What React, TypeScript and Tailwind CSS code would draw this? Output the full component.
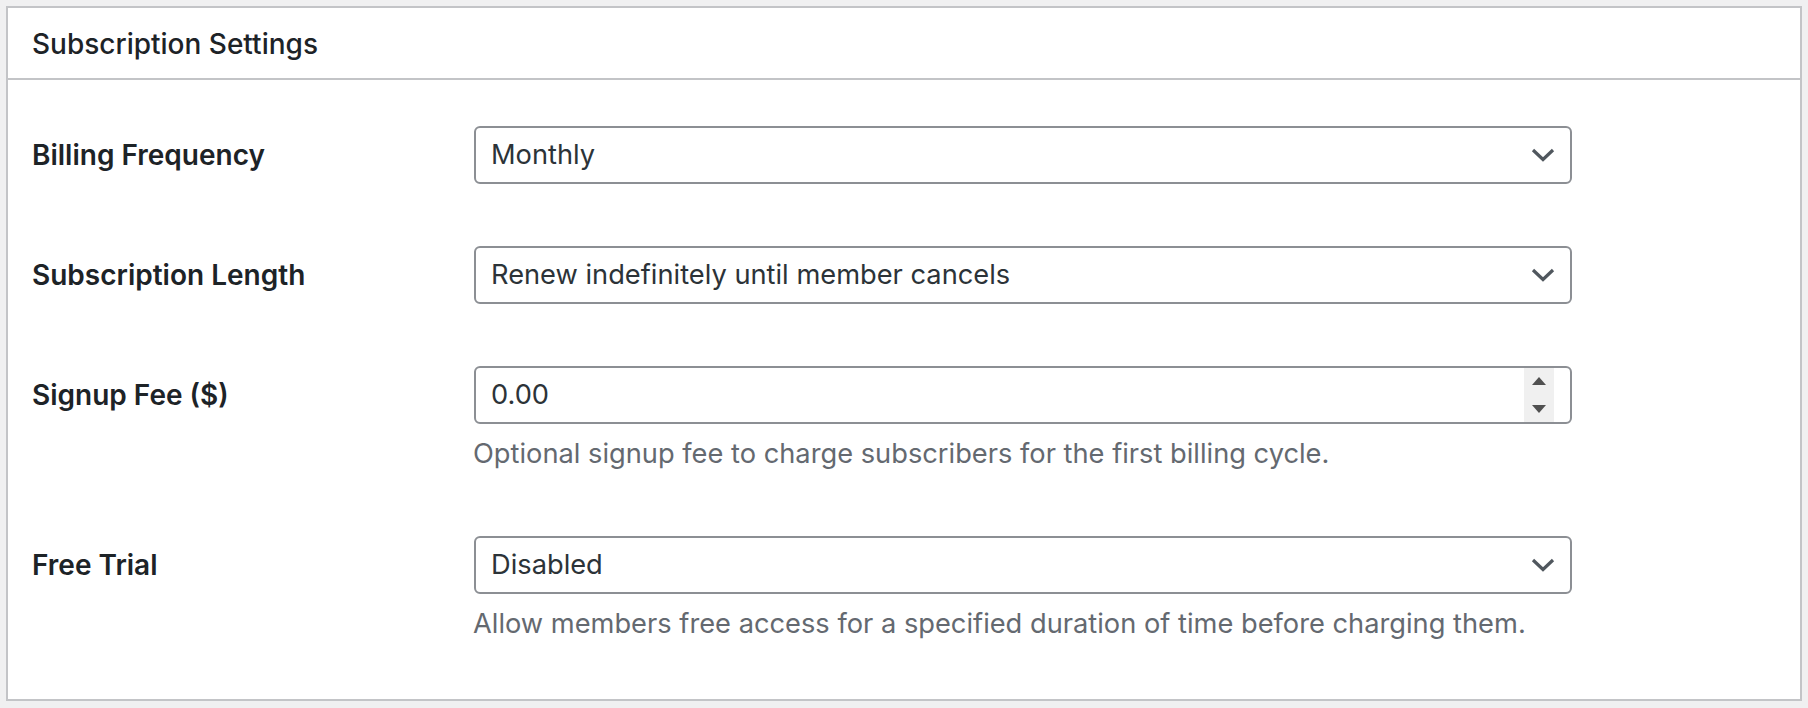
import React from "react";

const font = { fontFamily: 'Inter, "Noto Sans", sans-serif' };

function Chevron() {
  return (
    <svg width="24" height="14" viewBox="0 0 24 14" className="shrink-0">
      <path d="M2 2 L12 11.5 L22 2" fill="none" stroke="#50575e" strokeWidth="3.2" strokeLinecap="butt" strokeLinejoin="miter" />
    </svg>
  );
}

function SelectBox({ value }: { value: string }) {
  return (
    <div className="flex h-[58px] w-[1098px] items-center justify-between rounded-[6px] border-2 border-[#8c8f94] bg-white pl-[15px] pr-[15px]">
      <span className="text-[27.25px] leading-none text-[#2c3338]">{value}</span>
      <Chevron />
    </div>
  );
}

function NumberBox({ value }: { value: string }) {
  return (
    <div className="flex h-[58px] w-[1098px] items-stretch justify-between rounded-[6px] border-2 border-[#8c8f94] bg-white pl-[15px] pr-[16px]">
      <span className="self-center text-[27.25px] leading-none text-[#2c3338]">{value}</span>
      <div className="flex w-[30px] flex-col items-center justify-between bg-[#f0f0f0] py-[9px]">
        <svg width="14" height="8" viewBox="0 0 14 8">
          <path d="M7 0 L14 8 L0 8 Z" fill="#505050" />
        </svg>
        <svg width="14" height="8" viewBox="0 0 14 8">
          <path d="M0 0 L14 0 L7 8 Z" fill="#505050" />
        </svg>
      </div>
    </div>
  );
}

function Label({ children }: { children: React.ReactNode }) {
  return (
    <div className="flex h-[58px] w-[442px] shrink-0 items-center text-[28px] font-semibold text-[#1d2327] -ml-[1px]">
      {children}
    </div>
  );
}

function Desc({ children }: { children: React.ReactNode }) {
  return (
    <div className="mt-[12px] h-[36px] text-[27.25px] leading-[36px] text-[#646970] -ml-[1px]">
      {children}
    </div>
  );
}

export default function App() {
  return (
    <div className="min-h-[708px] w-[1808px] bg-[#f0f0f1] p-[6px]" style={font}>
      <div className="border-2 border-[#c3c4c7] bg-white">
        <div className="flex h-[72px] items-center border-b-2 border-[#c3c4c7] pl-[24px] pt-[1px]">
          <h2 className="text-[28px] font-medium text-[#1d2327]">Subscription Settings</h2>
        </div>
        <div className="flex flex-col pl-[25px] pt-[46px] pb-[57px]">
          <div className="flex items-start">
            <Label>Billing Frequency</Label>
            <SelectBox value="Monthly" />
          </div>
          <div className="mt-[62px] flex items-start">
            <Label>Subscription Length</Label>
            <SelectBox value="Renew indefinitely until member cancels" />
          </div>
          <div className="mt-[62px] flex items-start">
            <Label>Signup Fee ($)</Label>
            <div className="flex flex-col">
              <NumberBox value="0.00" />
              <Desc>Optional signup fee to charge subscribers for the first billing cycle.</Desc>
            </div>
          </div>
          <div className="mt-[64px] flex items-start">
            <Label>Free Trial</Label>
            <div className="flex flex-col">
              <SelectBox value="Disabled" />
              <Desc>Allow members free access for a specified duration of time before charging them.</Desc>
            </div>
          </div>
        </div>
      </div>
    </div>
  );
}
